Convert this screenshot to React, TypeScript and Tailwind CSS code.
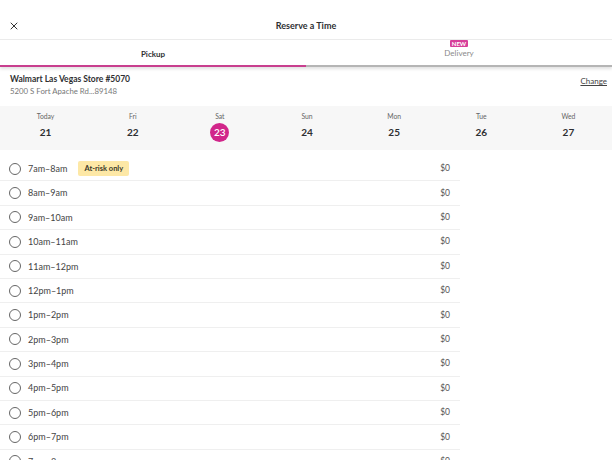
import { X } from 'lucide-react'

const days = [
  { label: 'Today', num: 21 },
  { label: 'Fri', num: 22 },
  { label: 'Sat', num: 23, selected: true },
  { label: 'Sun', num: 24 },
  { label: 'Mon', num: 25 },
  { label: 'Tue', num: 26 },
  { label: 'Wed', num: 27 },
]

const slots = [
  '7am–8am',
  '8am–9am',
  '9am–10am',
  '10am–11am',
  '11am–12pm',
  '12pm–1pm',
  '1pm–2pm',
  '2pm–3pm',
  '3pm–4pm',
  '4pm–5pm',
  '5pm–6pm',
  '6pm–7pm',
  '7pm–8pm',
]

export default function App() {
  return (
    <div className="w-[612px] h-[460px] overflow-hidden bg-white text-[#2e2f32]" style={{ fontFamily: 'Lato, "Open Sans", sans-serif' }}>
      {/* Header */}
      <div className="relative h-[40px] flex items-center justify-center border-b border-[#ececec] pt-[13px]">
        <X className="absolute left-[8px] top-[20px] h-[12px] w-[12px] text-[#333]" strokeWidth={2} />
        <span className="text-[9px] font-bold">Reserve a Time</span>
      </div>

      {/* Tabs */}
      <div className="relative flex h-[27px] shadow-[0_2px_3px_rgba(0,0,0,0.12)]">
        <div className="flex-1 flex items-center justify-center border-b-[2px] border-[#c83f8f] pt-[2px]">
          <span className="text-[8px] font-bold">Pickup</span>
        </div>
        <div className="flex-1 flex flex-col items-center justify-end border-b-[2px] border-[#b5b5b5] pb-[7px]">
          <span className="mb-[2px] rounded-[1px] bg-[#d73f9a] px-[2px] text-[6px] font-bold leading-[7px] text-white">NEW</span>
          <span className="text-[8px] text-[#8a8a8a] leading-[9px]">Delivery</span>
        </div>
      </div>

      {/* Store */}
      <div className="flex items-start justify-between pl-[10px] pr-[5px] pt-[7px] h-[39px]">
        <div className="flex flex-col">
          <span className="text-[8.5px] font-bold leading-[11px]">Walmart Las Vegas Store #5070</span>
          <span className="text-[7.8px] text-[#777] leading-[12px]">5200 S Fort Apache Rd...89148</span>
        </div>
        <span className="mt-[1px] text-[8px] underline text-[#444]">Change</span>
      </div>

      {/* Dates */}
      <div className="flex h-[44px] bg-[#f7f7f7] pl-[2px]">
        {days.map((d) => (
          <div key={d.num} className="flex-1 flex flex-col items-center pt-[6px]">
            <span className="text-[6.8px] text-[#666] leading-[8px]">{d.label}</span>
            {d.selected ? (
              <span className="mt-[3px] flex h-[19px] w-[19px] items-center justify-center rounded-full bg-[#d1268a] text-[10px] font-semibold text-white">
                {d.num}
              </span>
            ) : (
              <span className="mt-[3px] flex h-[19px] items-center text-[10px] font-bold">{d.num}</span>
            )}
          </div>
        ))}
      </div>

      {/* Slots */}
      <div className="mt-[7px] w-[460px]">
        {slots.map((s, i) => (
          <div key={s} className="flex h-[24.4px] items-center border-b border-[#efefef] pl-[9px] pr-[10px]">
            <span className="h-[12px] w-[12px] rounded-full border border-[#666]" />
            <span className="ml-[7px] text-[9px] text-[#444]">{s}</span>
            {i === 0 && (
              <span className="ml-[11px] rounded-[2px] bg-[#fde8a6] px-[6px] py-[2px] text-[7.5px] font-bold text-[#3a3a2a]">
                At-risk only
              </span>
            )}
            <span className="ml-auto text-[8.5px] text-[#555]">$0</span>
          </div>
        ))}
      </div>
    </div>
  )
}
